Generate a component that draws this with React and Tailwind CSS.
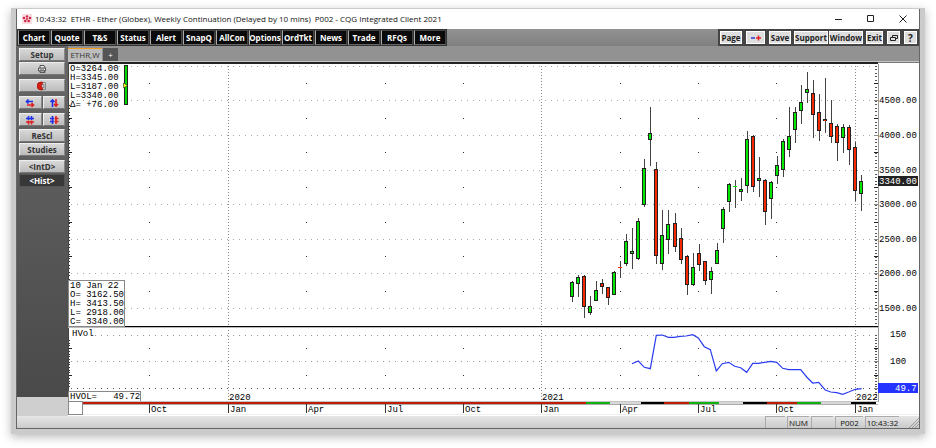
import React from 'react';

const menuItems = ['Chart', 'Quote', 'T&S', 'Status', 'Alert', 'SnapQ', 'AllCon', 'Options', 'OrdTkt', 'News', 'Trade', 'RFQs', 'More'];

// [high, body top, body bottom, low, colour], one entry per week
const candles = [
    [281, 282, 297, 302, 'g'],
    [275, 277, 284, 297, 'g'],
    [275, 276, 307, 318, 'r'],
    [296, 306, 313, 315, 'g'],
    [281, 290, 301, 301, 'g'],
    [279, 283, 287, 294, 'r'],
    [287, 287, 298, 305, 'r'],
    [271, 272, 295, 295, 'g'],
    [261, 267, 268, 278, 'r'],
    [234, 241, 264, 266, 'g'],
    [228, 251, 254, 269, 'g'],
    [218, 221, 259, 260, 'g'],
    [159, 168, 205, 207, 'g'],
    [107, 133, 140, 166, 'g'],
    [162, 169, 256, 264, 'r'],
    [210, 235, 264, 270, 'g'],
    [210, 224, 240, 254, 'g'],
    [213, 223, 247, 252, 'r'],
    [228, 238, 260, 264, 'r'],
    [255, 256, 285, 295, 'r'],
    [253, 267, 285, 286, 'g'],
    [244, 253, 265, 271, 'r'],
    [261, 261, 281, 285, 'r'],
    [267, 271, 280, 294, 'g'],
    [243, 250, 264, 264, 'g'],
    [207, 209, 229, 243, 'g'],
    [183, 184, 202, 212, 'g'],
    [180, 186, 187, 208, 'g'],
    [178, 189, 192, 201, 'g'],
    [131, 139, 186, 193, 'g'],
    [135, 136, 187, 192, 'r'],
    [157, 178, 181, 197, 'g'],
    [179, 180, 212, 225, 'r'],
    [181, 182, 199, 219, 'g'],
    [156, 165, 176, 184, 'g'],
    [139, 141, 170, 177, 'g'],
    [107, 136, 150, 157, 'g'],
    [107, 112, 130, 143, 'g'],
    [85, 102, 111, 124, 'g'],
    [72, 89, 93, 103, 'g'],
    [80, 93, 115, 138, 'r'],
    [94, 112, 131, 141, 'r'],
    [78, 119, 121, 133, 'r'],
    [100, 123, 137, 143, 'r'],
    [124, 126, 143, 161, 'r'],
    [124, 127, 138, 153, 'g'],
    [125, 127, 150, 165, 'r'],
    [142, 147, 191, 201, 'r'],
    [175, 181, 194, 211, 'g'],
];

const volatility =
    '632,363.7 638.3,361 644.3,367.3 650.3,368.7 656.3,335.3 662.3,335 668.3,337.3 674,337.3 680,336.3 686,336 692.7,334.7 698.3,338 704.3,346.7 710.3,349.7 716.3,371 722.3,363.7 728.7,362.3 734.7,366.3 740.7,367.7 746.7,372.3 752.7,363.3 758.7,363.3 764.7,362.3 770.7,361.3 776.7,362.3 782.7,368.3 788.7,369.7 800.7,369.7 806.7,377 812.7,383 818.7,382.3 825.3,390 830.7,392 836.7,392.7 842.7,394.3 848.7,392 855.3,389.3 861.7,388.7';

const priceRows = [
    [66, null],
    [100, '4500.00'],
    [135, '4000.00'],
    [170, '3500.00'],
    [204, '3000.00'],
    [239, '2500.00'],
    [273, '2000.00'],
    [308, '1500.00'],
];

const months = [
    [149, 'Oct'],
    [228, 'Jan', '2020'],
    [306, 'Apr'],
    [385, 'Jul'],
    [463, 'Oct'],
    [541, 'Jan', '2021'],
    [620, 'Apr'],
    [698, 'Jul'],
    [776, 'Oct'],
    [855, 'Jan', '2022'],
];

const sessions = [
    [82, 586, '#c01c04'],
    [586, 610, '#10b010'],
    [610, 641, '#d8d8d8'],
    [641, 664, '#000000'],
    [664, 689, '#c01c04'],
    [689, 719, '#10b010'],
    [719, 743, '#d8d8d8'],
    [743, 767, '#000000'],
    [767, 797, '#c01c04'],
    [797, 821, '#10b010'],
    [821, 851, '#d8d8d8'],
    [851, 876, '#000000'],
];

const Lines = ({ x, y, rows }) =>
    rows.map((row, i) => (
        <text key={i} x={x} y={y + i * 9} className="whitespace-pre">
            {row}
        </text>
    ));

const Candle = ({ x, data }) => {
    const [high, top, bottom, low, side] = data;
    const fill = side === 'g' ? '#00e800' : '#f62800';
    const thin = bottom - top < 2;
    return (
        <g>
            <rect x={x} y={high} width="1" height={low - high} fill="#444" />
            {thin ? (
                <rect x={x - 2} y={top} width="4" height="1" fill={fill} />
            ) : (
                <>
                    <rect x={x - 2} y={top} width="4" height={bottom - top} fill="#222" />
                    <rect x={x - 1} y={top + 1} width="2" height={Math.max(bottom - top - 2, 1)} fill={fill} />
                </>
            )}
        </g>
    );
};

const Chart = () => (
    <svg viewBox="68 62 851 354" className="block h-auto w-full bg-white font-['Liberation_Mono',monospace] text-[9px]" shapeRendering="crispEdges" role="img" aria-label="ETHR weekly chart">
        <rect x="68" y="62" width="810" height="2" fill="#222" />
        <rect x="878" y="62" width="41" height="1" fill="#777" />

        {/* grid */}
        {priceRows.map(([y]) => (
            <line key={y} x1="71" x2="876" y1={y + 0.5} y2={y + 0.5} stroke="#aaa" strokeDasharray="1 5" />
        ))}
        {[335, 361, 388].map((y) => (
            <line key={y} x1={y === 335 ? 95 : 71} x2="876" y1={y + 0.5} y2={y + 0.5} stroke={y === 388 ? '#555' : '#999'} strokeDasharray="1 5" />
        ))}
        {months.map(([x, , year]) =>
            year ? (
                <line key={x} x1={x + 0.5} x2={x + 0.5} y1="66" y2="401" stroke="#888" strokeDasharray="1 2" />
            ) : (
                [83, 118, 152, 187, 222, 256, 291, 348, 375].map((y) => <rect key={y + '-' + x} x={x} y={y} width="1" height="1" fill="#333" />)
            )
        )}
        <line x1="69.5" x2="69.5" y1="105" y2="325" stroke="#333" strokeDasharray="1 2.47" />
        <line x1="69.5" x2="69.5" y1="340" y2="388" stroke="#333" strokeDasharray="1 1.7" />
        <line x1="876" x2="876" y1="66" y2="325" stroke="#555" strokeWidth="2" strokeDasharray="1 2.47" />
        <line x1="876" x2="876" y1="335" y2="400" stroke="#555" strokeWidth="2" strokeDasharray="1 1.7" />
        {[83, 118, 152, 187, 222, 256, 291, 348, 375].map((y) => (
            <g key={y} fill="#222">
                {y > 110 && <rect x="69" y={y} width="3" height="1" />}
                <rect x="874" y={y} width="4" height="1" />
            </g>
        ))}
        {[100, 135, 170, 204, 239, 273, 308, 361, 388].map((y) => (
            <rect key={y} x="874" y={y} width="4" height="1" fill="#888" />
        ))}
        <rect x="68" y="62" width="1" height="353" fill="#444" />
        <rect x="878" y="64" width="1" height="338" fill="#999" />

        {/* price and volatility */}
        {candles.map((data, i) => (
            <Candle key={i} x={572 + Math.round(i * 6.03)} data={data} />
        ))}
        <polyline points={volatility} fill="none" stroke="#2b3cf0" strokeWidth="1.2" shapeRendering="auto" />
        <rect x="68" y="326" width="810" height="1" fill="#000" />
        <rect x="68" y="327" width="810" height="1" fill="#bbb" />

        {/* opening readout */}
        <Lines x={70} y={71} rows={['O=3264.00', 'H=3345.00', 'L=3187.00', 'L=3340.00', 'Δ= +76.00']} />
        <rect x="124" y="65" width="4" height="40" fill="#222" />
        <rect x="125" y="66" width="2" height="38" fill="#00d800" />
        <path d="M123.5 83 L127.5 85.5 L123.5 88 Z" fill="#ffff20" stroke="#222" strokeWidth="0.6" shapeRendering="auto" />

        {/* cursor readout */}
        <rect x="68.5" y="280.5" width="56" height="46" fill="#fff" stroke="#888" />
        <Lines x={70} y={288} rows={['10 Jan 22', 'O= 3162.50', 'H= 3413.50', 'L= 2918.00', 'C= 3340.00']} />
        <text x="72" y="336">HVol</text>
        <rect x="68.5" y="391.5" width="72" height="10" fill="#fff" stroke="#888" />
        <text x="70" y="399" className="whitespace-pre">HVOL=   49.72</text>

        {/* time axis */}
        <rect x="82" y="401" width="796" height="1" fill="#c4c4c4" />
        <rect x="82" y="404" width="796" height="1" fill="#aaa" />
        {sessions.map(([from, to, color]) => (
            <rect key={from} x={from} y="402" width={to - from} height="2" fill={color} />
        ))}
        <rect x="68.5" y="401.5" width="14" height="13" fill="#fff" stroke="#888" />
        <rect x="83" y="414" width="836" height="1" fill="#eee" />
        {months.map(([x, label, year]) => (
            <g key={x}>
                <rect x={x} y="404" width="1" height="9" fill="#333" />
                <text x={x + 2} y="412">{label}</text>
                {year && <text x={x + 1} y="400">{year}</text>}
            </g>
        ))}

        {/* value axis */}
        {priceRows.filter(([, label]) => label).map(([y, label]) => (
            <text key={y} x="879" y={y + 3}>{label}</text>
        ))}
        <text x="890" y="337">150</text>
        <text x="890" y="364">100</text>
        <rect x="878" y="176" width="40" height="10" fill="#222" />
        <text x="879" y="184" fill="#fff">3340.00</text>
        <rect x="878" y="383" width="40" height="10" fill="#2433ff" />
        <text x="895" y="391" fill="#fff">49.7</text>
    </svg>
);

const SideButton = ({ label, dark, children }) => (
    <button
        aria-label={label}
        className={
            dark
                ? 'flex h-[13px] flex-1 items-center justify-center border border-[#555] bg-[#383838] text-white'
                : 'flex h-[13px] flex-1 items-center justify-center border border-t-[#eee] border-r-[#888] border-b-[#777] border-l-[#eee] bg-gradient-to-b from-[#d8d8d8] to-[#bcbcbc] text-[#333]'
        }
    >
        {children}
    </button>
);

const ArrowIcon = ({ blue, red }) => (
    <svg viewBox="0 0 10 10" className="size-[10px]" fill="none" strokeWidth="1.6">
        <path d={blue} stroke="#2030e8" />
        <path d={red} stroke="#e02020" />
    </svg>
);

const Sidebar = () => (
    <aside className="flex w-[51px] shrink-0 flex-col bg-gradient-to-b from-[#686868] to-[#484848] text-[8px] leading-none font-bold">
        <div className="flex flex-1 flex-col pt-[2px] pr-[3px] pl-[2px]">
            <div className="flex"><SideButton>Setup</SideButton></div>
            <div className="mt-px flex">
                <SideButton label="Print">
                    <svg viewBox="0 0 10 10" className="size-[10px]" fill="none" stroke="#555">
                        <path d="M3 4V1.5h4L8 4M1.5 4h7v3h-7zM3 6h4l1 2.5H3z" fill="#eee" />
                        <path d="M2 4.5h6" stroke="#888" />
                    </svg>
                </SideButton>
            </div>
            <div className="mt-1 flex">
                <SideButton label="Magnet">
                    <svg viewBox="0 0 10 10" className="size-[10px]" fill="none">
                        <path d="M5.5 1H4a4 4 0 0 0 0 8h1.5V6.5H4.5v-3h1z" fill="#d81c10" stroke="#901010" strokeWidth=".6" />
                        <path d="M6 1.5h2.5v7H6M6 3.5h1v3H6" stroke="#888" />
                    </svg>
                </SideButton>
            </div>
            <div className="mt-1 flex gap-px">
                <SideButton label="Compress time">
                    <ArrowIcon blue="M1 3.5h7M3.5 1.5L1.5 3.5l2 2" red="M2 7h7M6.5 5l2 2-2 2" />
                </SideButton>
                <SideButton label="Compress price">
                    <ArrowIcon blue="M3.5 9V2M1.5 4l2-2 2 2" red="M7 1v7M5 6l2 2 2-2" />
                </SideButton>
            </div>
            <div className="mt-1 flex gap-px">
                <SideButton label="Expand time">
                    <ArrowIcon blue="M1 3.5h8M3.5 1v4M6.5 1v4" red="M1 7h8M3.5 5.5v4M6.5 5.5v4" />
                </SideButton>
                <SideButton label="Expand price">
                    <ArrowIcon blue="M3.5 1v8M1 3.5h4M1 6.5h4" red="M7 1v8M5.5 3.5h4M5.5 6.5h4" />
                </SideButton>
            </div>
            <div className="mt-[3px] flex"><SideButton>ReScl</SideButton></div>
            <div className="mt-px flex"><SideButton>Studies</SideButton></div>
            <div className="mt-1 flex"><SideButton>&lt;IntD&gt;</SideButton></div>
            <div className="mt-px flex"><SideButton dark>&lt;Hist&gt;</SideButton></div>
        </div>
        <div className="h-[19px] bg-[#cfcfcf]" />
    </aside>
);

const ToolButton = ({ label, size, children }) => (
    <button aria-label={label} className={`flex h-[13px] items-center justify-center border border-white bg-[#dedede] text-[#222] ${size}`}>
        {children}
    </button>
);

const App = () => {
    return (
        <div className="bg-white px-[11px] pt-2 pb-[14px] font-['Open_Sans',sans-serif]">
            <div className="border-x-[5px] border-t border-b-[5px] border-[#cbcbcb] shadow-[0_3px_9px_rgba(0,0,0,0.28)]">
                <div className="border-r border-b border-l border-[#666]">
                    <header className="flex h-5 items-center bg-white pr-3 pl-[5px] text-[8px] whitespace-nowrap text-[#111]">
                        <svg viewBox="0 0 10 10" className="mr-[3px] size-[10px]" fill="#d02848">
                            <rect width="10" height="10" fill="#f7dce2" />
                            <circle cx="2" cy="4" r="1.3" />
                            <circle cx="5" cy="2.5" r="1.2" />
                            <circle cx="8" cy="4" r="1.3" />
                            <circle cx="3.3" cy="7" r="1.3" />
                            <circle cx="6.7" cy="7" r="1.3" />
                            <circle cx="5" cy="5" r="1" />
                        </svg>
                        <span>10:43:32</span>
                        <span className="ml-1">ETHR - Ether (Globex), Weekly Continuation (Delayed by 10 mins)</span>
                        <span className="ml-1">P002 - CQG Integrated Client 2021</span>
                        <div className="ml-auto flex gap-6">
                            <button aria-label="Minimize">
                                <svg viewBox="0 0 8 8" className="size-2" stroke="#222"><path d="M0 4.5h7" /></svg>
                            </button>
                            <button aria-label="Maximize">
                                <svg viewBox="0 0 8 8" className="size-2" stroke="#222" fill="none"><path d="M.5 .5h6v6h-6z" /></svg>
                            </button>
                            <button aria-label="Close">
                                <svg viewBox="0 0 8 8" className="size-2" stroke="#222"><path d="M.5 .5l7 7M7.5 .5l-7 7" /></svg>
                            </button>
                        </div>
                    </header>

                    <nav className="flex h-[17px] justify-between bg-gradient-to-b from-[#929292] to-[#808080] text-[8px] leading-none font-bold">
                        <div className="flex gap-px bg-[#333] p-px">
                            {menuItems.map((item) => (
                                <button key={item} className="flex w-8 items-center justify-center border border-t-[#444] border-r-[#444] border-b-[#666] border-l-[#aaa] bg-[#0a0a0a] text-white">
                                    {item}
                                </button>
                            ))}
                        </div>
                        <div className="flex items-center bg-[#444] px-[2px]">
                            <ToolButton size="w-[22px]">Page</ToolButton>
                            <ToolButton size="ml-1 w-[19px]" label="Zoom">
                                <svg viewBox="0 0 10 6" className="h-[6px] w-[10px]" strokeWidth="1.4">
                                    <path d="M0 3h4" stroke="#2030d0" />
                                    <path d="M5 3h5M7.5 .5v5" stroke="#e02020" />
                                </svg>
                            </ToolButton>
                            <ToolButton size="ml-1 w-[22px]">Save</ToolButton>
                            <ToolButton size="ml-[3px] w-[34px]">Support</ToolButton>
                            <ToolButton size="ml-px w-[34px]">Window</ToolButton>
                            <ToolButton size="ml-[3px] w-[17px]">Exit</ToolButton>
                            <ToolButton size="ml-1 w-[13px]" label="Restore">
                                <svg viewBox="0 0 8 8" className="size-2" fill="none" stroke="#222"><path d="M2.5 3V1.5h5v3H6M.5 3.5h5v3h-5z" /></svg>
                            </ToolButton>
                            <ToolButton size="ml-1 w-[13px]"><span className="text-[10px]">?</span></ToolButton>
                        </div>
                    </nav>

                    <div className="flex">
                        <Sidebar />
                        <main className="min-w-0 flex-1">
                            <div className="flex h-4 items-end border-b border-[#c4c4c4] bg-[#929292] text-[8px] leading-none">
                                <button className="h-[13px] w-[34px] border-t border-[#f09a20] bg-[#bdbdbd] text-[#333]">ETHR,W</button>
                                <button aria-label="Add tab" className="ml-px h-[13px] w-[15px] bg-[#555] text-white">+</button>
                            </div>
                            <Chart />
                        </main>
                    </div>

                    <footer className="flex h-3 items-stretch justify-end gap-[2px] bg-gradient-to-b from-[#e6e6e6] to-[#cacaca] text-[8px] leading-[11px] text-[#111]">
                        <span className="w-5 border-t border-l border-[#aaa]" />
                        <span className="w-[22px] border-t border-l border-[#aaa] text-center">NUM</span>
                        <span className="w-[22px] border-t border-l border-[#aaa]" />
                        <span className="w-7 border-t border-l border-[#aaa] text-center">P002</span>
                        <span className="w-[34px] border-t border-l border-[#aaa] text-center">10:43:32</span>
                        <svg viewBox="0 0 10 10" className="ml-2 size-[10px] self-end" stroke="#999"><path d="M0 10L10 0M3 10l7-7M6 10l4-4" /></svg>
                    </footer>
                </div>
            </div>
        </div>
    );
};

export default App;
